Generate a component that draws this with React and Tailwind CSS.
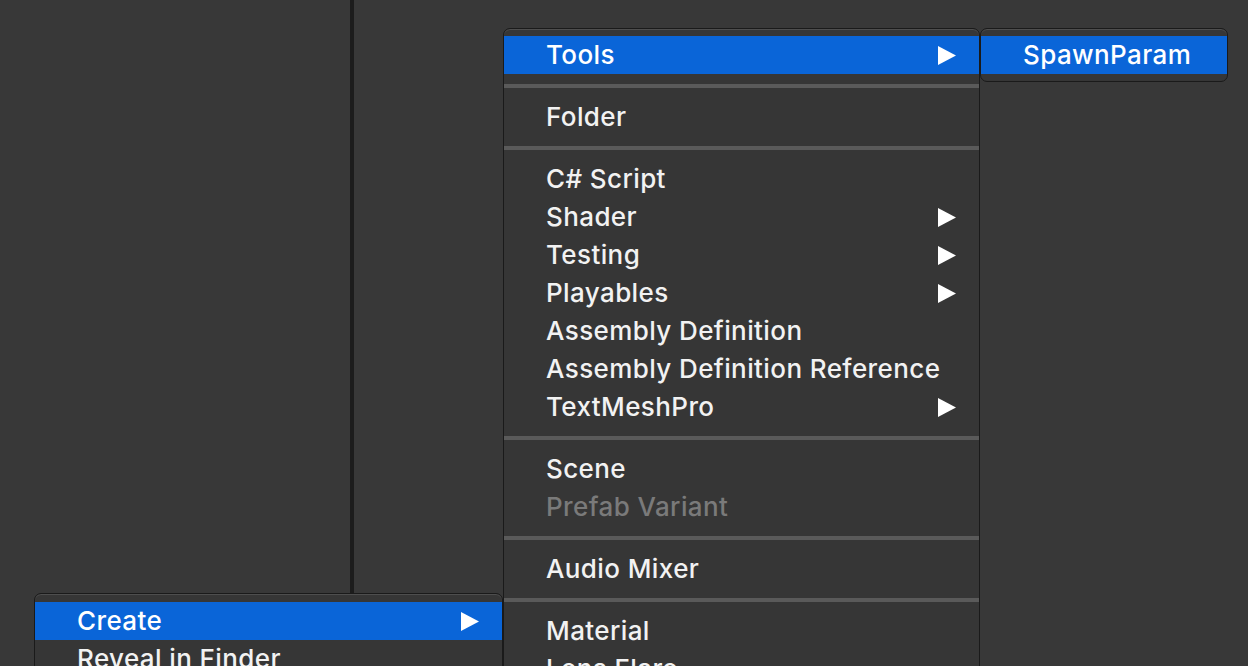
import React from 'react';

const font = { fontFamily: 'Inter, "Noto Sans", "Liberation Sans", sans-serif' };

function Arrow() {
  return (
    <svg width="18" height="19" viewBox="0 0 18 19" className="shrink-0">
      <polygon points="0,0 18,9.5 0,19" fill="#ffffff" />
    </svg>
  );
}

function Item({ label, arrow, active, disabled }) {
  return (
    <div
      className={`h-[38px] flex items-center justify-between pl-[42px] pr-[23px] text-[26px] font-medium tracking-[0.4px] leading-none ${
        active ? 'bg-[#0a65d8] text-white' : disabled ? 'text-[#7a7a7a]' : 'text-[#f2f2f2]'
      }`}
    >
      <span className="whitespace-nowrap">{label}</span>
      {arrow && <Arrow />}
    </div>
  );
}

function Sep() {
  return (
    <div className="h-[24px] flex items-center">
      <div className="h-[4px] w-full bg-[#5a5a5a]" />
    </div>
  );
}

const createItems = [
  { label: 'Tools', arrow: true, active: true },
  'sep',
  { label: 'Folder' },
  'sep',
  { label: 'C# Script' },
  { label: 'Shader', arrow: true },
  { label: 'Testing', arrow: true },
  { label: 'Playables', arrow: true },
  { label: 'Assembly Definition' },
  { label: 'Assembly Definition Reference' },
  { label: 'TextMeshPro', arrow: true },
  'sep',
  { label: 'Scene' },
  { label: 'Prefab Variant', disabled: true },
  'sep',
  { label: 'Audio Mixer' },
  'sep',
  { label: 'Material' },
  { label: 'Lens Flare' },
];

export default function App() {
  return (
    <div className="relative w-[1248px] h-[666px] overflow-hidden bg-[#383838] flex" style={font}>
      {/* Editor panels behind the menus */}
      <div className="w-[350px] h-full bg-[#383838]" />
      <div className="w-[4px] h-full bg-[#1c1c1c]" />
      <div className="flex-1 h-full bg-[#383838]" />

      {/* Context menu (bottom left) */}
      <div className="absolute left-[34px] top-[593px] w-[469px] h-[120px] bg-[#363636] border border-[#1a1a1a] rounded-t-[7px] pt-[8px] shadow-[inset_0_1px_0_rgba(255,255,255,0.12)]">
        <Item label="Create" arrow active />
        <Item label="Reveal in Finder" />
      </div>

      {/* Create submenu */}
      <div className="absolute left-[503px] top-[28px] w-[477px] h-[700px] bg-[#363636] border border-[#1a1a1a] rounded-t-[7px] pt-[7px] shadow-[inset_0_1px_0_rgba(255,255,255,0.12)]">
        {createItems.map((it, i) =>
          it === 'sep' ? <Sep key={i} /> : <Item key={i} {...it} />
        )}
      </div>

      {/* Tools submenu */}
      <div className="absolute left-[980px] top-[28px] w-[248px] h-[54px] bg-[#363636] border border-[#1a1a1a] rounded-[7px] pt-[7px] overflow-hidden shadow-[inset_0_1px_0_rgba(255,255,255,0.12)]">
        <Item label="SpawnParam" active />
      </div>
    </div>
  );
}
